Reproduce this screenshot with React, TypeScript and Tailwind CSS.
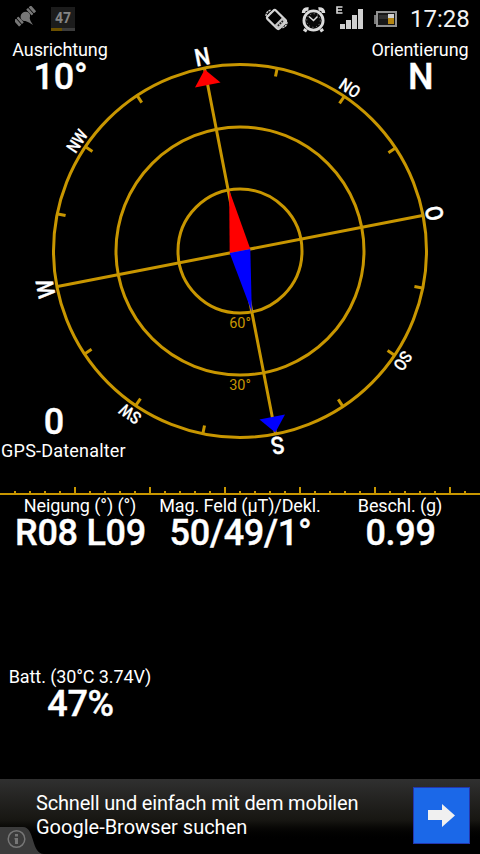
import React from "react";

type ReadingProps = {
  label: string;
  value: string;
  className?: string;
  labelClass?: string;
  valueClass?: string;
};

const GOLD = "#c89600";
const HEADING = -11;

const compassLabels = [
  { text: "N", angle: 0, size: 24 },
  { text: "NO", angle: 45, size: 17 },
  { text: "O", angle: 90, size: 24 },
  { text: "SO", angle: 135, size: 17 },
  { text: "S", angle: 180, size: 24 },
  { text: "SW", angle: 225, size: 17 },
  { text: "W", angle: 270, size: 24 },
  { text: "NW", angle: 315, size: 17 },
];

const Reading = ({ label, value, className = "", labelClass = "", valueClass = "" }: ReadingProps) => (
  <div className={`flex flex-col items-center whitespace-nowrap ${className}`}>
    <div className={`text-[18px] leading-5 tracking-[-0.1px] ${labelClass}`}>{label}</div>
    <div className={`ml-px text-[36px] leading-[34px] font-medium tracking-[-0.3px] [-webkit-text-stroke:0.4px_white] ${valueClass}`}>{value}</div>
  </div>
);

const StatusBar = () => (
  <header className="flex h-10 shrink-0 items-start">
    <svg className="ml-[15px] mt-[6px]" width="22" height="22" viewBox="0 0 22 22">
      <g transform="rotate(-42 10 10)" fill="#777">
        <rect x="-1.500" y="6" width="3" height="8" rx=".5" />
        <rect x="2.300" y="6" width="2.500" height="8" rx=".5" />
        <ellipse cx="10" cy="10.500" rx="5" ry="4.500" />
        <rect x="15.200" y="6" width="2.500" height="8" rx=".5" />
        <rect x="18.500" y="6" width="3" height="8" rx=".5" />
      </g>
      <path d="M8 14l6-4 1.500 5 2.500 4-4-2.500z" fill="#777" />
    </svg>
    <div className="ml-[14px] mt-[7px] flex h-6 w-6 flex-col bg-[#1c1c1c]">
      <div className="h-[21px] text-center text-[14px] leading-[22px] font-bold text-[#858585]">47</div>
      <div className="flex h-[3px] bg-[#3c3c3c]">
        <div className="w-[11px] bg-[#6b5000]" />
      </div>
    </div>
    <svg className="ml-[190px] mt-[8px]" width="23" height="23" viewBox="0 0 23 23" fill="none" stroke="#d4d4d4">
      <g transform="rotate(-45 11.500 11.500)">
        <rect x="5.500" y="3" width="12" height="17" rx="2" strokeWidth="2.200" />
        <path d="M6 14h11v4a2 2 0 0 1-2 2H8a2 2 0 0 1-2-2z" fill="#c4c4c4" stroke="none" />
        <path d="M8 17h7" stroke="#222" strokeWidth="1.800" strokeDasharray="1.700 1" />
      </g>
      <path d="M1 8c0-3 2-5 5-6M3.500 8.500c0-2 1.500-3.500 3.500-4.500M22 14c0 3-2 5-5 6M19.500 13.500c0 2-1.500 3.500-3.500 4.500" strokeWidth="1.400" strokeDasharray="2.200 .6" />
    </svg>
    <svg className="ml-[13px] mt-[7px]" width="25" height="26" viewBox="0 0 25 26" fill="none" stroke="#dcdcdc">
      <path d="M2.500 6c0-3 2-4.500 5-4M22.500 6c0-3-2-4.500-5-4M5 22l-1.500 2.500M20 22l1.500 2.500" strokeWidth="3.500" />
      <circle cx="12.500" cy="13.500" r="9.600" fill="#090909" strokeWidth="2.800" />
      <circle cx="12.500" cy="13.500" r="6.800" strokeWidth="1" strokeDasharray="1 2.560" stroke="#999" />
      <path d="M8 9.500l4.500 4 4-4" strokeWidth="1.500" />
    </svg>
    <svg className="ml-[9px] mt-[6px]" width="29" height="24" viewBox="0 0 29 24">
      <path d="M7.500 1H2v6h5.500M2 4h5" fill="none" stroke="#d8d8d8" strokeWidth="1.600" />
      <path d="M5 18h5v5H5zM11 14h5v9h-5zM17 9h5v14h-5zM23 3h5v20h-5z" fill="#cfcfcf" />
    </svg>
    <svg className="ml-[10px] mt-[11px]" width="24" height="17" viewBox="0 0 24 17">
      <path d="M0 4h3v9H0z" fill="#777" />
      <rect x="3" y="1" width="19" height="14" fill="#171717" stroke="#929292" strokeWidth="2" />
      <path d="M5 4h9v4H5z" fill="#303030" />
      <path d="M14 3h6v4h-6z" fill="#d0d0d0" />
      <path d="M14 7h6v6h-6z" fill="#b48512" />
    </svg>
    <div className="ml-[12px] mt-1.5 text-[24px] leading-[27px] text-[#f4f4f4]">17:28</div>
  </header>
);

const Compass = () => {
  const ticks = Array.from({ length: 16 }, (_, i) => i * 22.5).filter((a) => a % 90 !== 0);

  return (
    <svg className="col-start-1 row-start-1" width="480" height="447" viewBox="0 40 480 447">
      <g fill="none" stroke={GOLD} strokeWidth="3">
        <circle cx="240" cy="251" r="62" />
        <circle cx="240" cy="251" r="124" />
        <circle cx="240" cy="251" r="186.500" />
      </g>
      <g transform={`translate(240 251) rotate(${HEADING})`}>
        <path d="M0-186V186M-186 0H186" stroke={GOLD} strokeWidth="3" />
        {ticks.map((angle) => (
          <path key={angle} d="M0-186v8" transform={`rotate(${angle})`} stroke={GOLD} strokeWidth="3" />
        ))}
        <path d="M1-62L10.500 0h-21z" fill="#f00" />
        <path d="M0 62L10.500 0h-21z" fill="#00f" />
        <path d="M0-185l13 16h-26z" fill="#f00" />
        <path d="M0 185l13-16h-26z" fill="#00f" />
        {compassLabels.map((item) => (
          <text
            key={item.text}
            y={item.size === 24 ? -189.5 : -190.5}
            transform={`rotate(${item.angle}) scale(.88 1)`}
            textAnchor="middle"
            fontSize={item.size}
            fontWeight={500}
            stroke="#fff"
            strokeWidth={item.size === 24 ? 0.4 : 0.2}
            fill="#fff"
          >
            {item.text}
          </text>
        ))}
      </g>
      <g fill={GOLD} fontSize="14.500" textAnchor="middle">
        <text x="240" y="328">60°</text>
        <text x="240" y="390">30°</text>
      </g>
    </svg>
  );
};

const Ruler = () => (
  <svg className="block shrink-0" width="480" height="8" viewBox="0 0 480 8" fill={GOLD}>
    <rect y="6" width="480" height="2" />
    {Array.from({ length: 31 }, (_, i) => i + 1).map((i) => (
      <rect key={i} x={i * 15 - 1} y={i % 5 === 0 ? 0 : 4} width="2" height="7" />
    ))}
  </svg>
);

const AdBanner = () => (
  <footer className="grid h-[75px] shrink-0 bg-linear-to-b from-[#303030] via-[#171612] via-55% to-black to-85%">
    <div className="col-start-1 row-start-1 self-end">
      <svg className="block" width="44" height="27" viewBox="0 0 44 27">
        <path d="M0 0h23c12 0 8 27 21 27H0z" fill="#3b3b3b" />
        <circle cx="16.500" cy="12" r="8.300" fill="none" stroke="#777" strokeWidth="1.500" />
        <path d="M15 7h3v2.500h-3zM14.500 11h3.500v6h-3v-4.500h-.5z" fill="#777" />
      </svg>
    </div>
    <div className="col-start-1 row-start-1 flex items-start justify-between pl-9 pr-[10px]">
      <p className="mt-3 text-[20px] leading-6 whitespace-nowrap">
        <span className="tracking-[-0.18px]">Schnell und einfach mit dem mobilen</span>
        <br />
        Google-Browser suchen
      </p>
      <div className="mt-2 flex h-[57px] w-[57px] items-center justify-center border border-[#2436ae] bg-[#1b68e8]">
        <svg width="27" height="23" viewBox="0 0 27 23">
          <path d="M0 6h14V0l13 11.500L14 23v-7H0z" fill="#f0f0f0" />
        </svg>
      </div>
    </div>
  </footer>
);

const App = () => {
  return (
    <div className="flex h-[854px] w-[480px] flex-col overflow-hidden bg-black font-[Roboto,sans-serif] text-white">
      <StatusBar />
      <main className="grid h-[447px] shrink-0">
        <Compass />
        <div className="col-start-1 row-start-1 flex h-[421px] flex-col justify-between">
          <div className="flex justify-between">
            <Reading label="Ausrichtung" value="10°" className="w-[120px]" />
            <Reading label="Orientierung" value="N" className="w-[120px]" />
          </div>
          <div className="flex w-[127px] flex-col items-center gap-0.5 whitespace-nowrap">
            <div className="ml-[-19px] text-[36px] leading-[34px] font-medium [-webkit-text-stroke:0.4px_white]">0</div>
            <div className="text-[18px] leading-5 tracking-[0.2px]">GPS-Datenalter</div>
          </div>
        </div>
      </main>
      <Ruler />
      <section className="mt-px grid h-[171px] shrink-0 grid-cols-[160px_160px_160px]">
        <Reading label="Neigung (°) (°)" value="R08 L09" />
        <Reading label="Mag. Feld (µT)/Dekl." value="50/49/1°" />
        <Reading label="Beschl. (g)" value="0.99" />
      </section>
      <section className="grid flex-1 grid-cols-[160px_160px_160px]">
        <Reading label="Batt. (30°C 3.74V)" value="47%" />
      </section>
      <AdBanner />
    </div>
  );
};

export default App;
